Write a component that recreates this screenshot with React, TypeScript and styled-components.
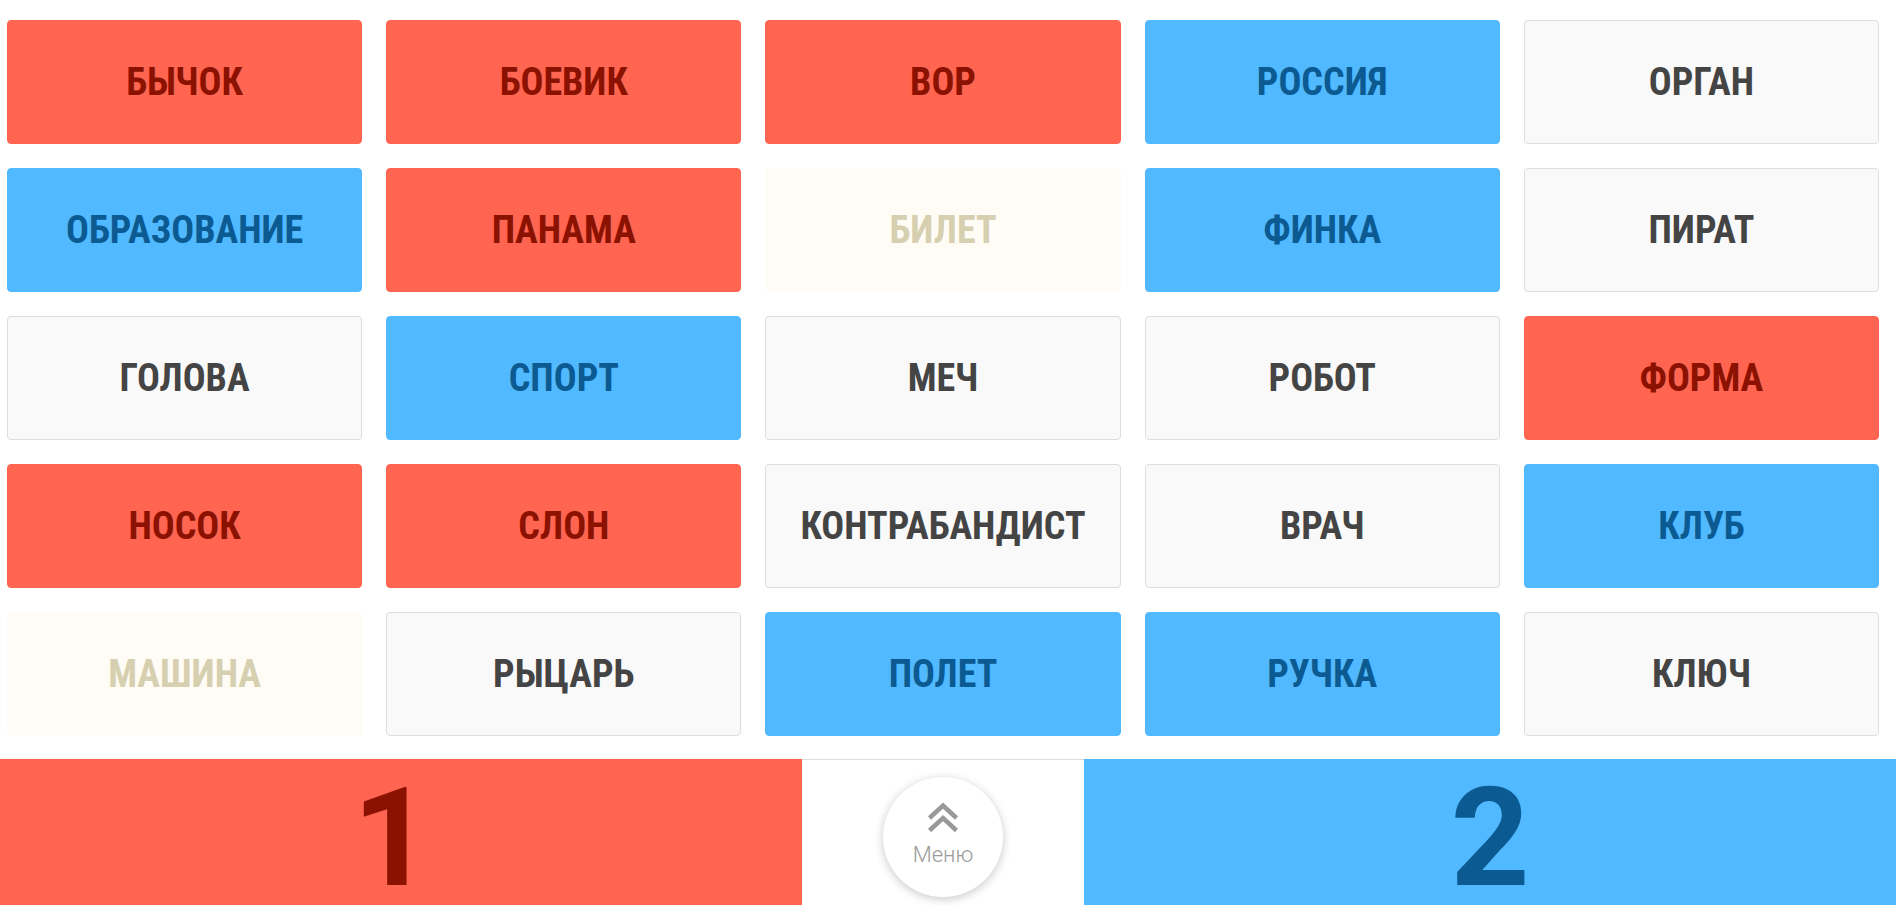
import React from "react";
import styled, { createGlobalStyle } from "styled-components";

const GlobalStyle = createGlobalStyle`
  html, body {
    margin: 0;
    padding: 0;
    background: #ffffff;
    overflow: hidden;
  }
  * { box-sizing: border-box; }
`;

type Kind = "red" | "blue" | "neutral" | "beige";

const palette: Record<Kind, { bg: string; fg: string; border: string }> = {
  red: { bg: "#ff6551", fg: "#8b1100", border: "#ff6551" },
  blue: { bg: "#51b9ff", fg: "#0b5a92", border: "#51b9ff" },
  neutral: { bg: "#f9f9f9", fg: "#444444", border: "#dddddd" },
  beige: { bg: "#fffcf5", fg: "#d6cfb0", border: "#fffcf5" },
};

const words: { text: string; kind: Kind }[] = [
  { text: "БЫЧОК", kind: "red" },
  { text: "БОЕВИК", kind: "red" },
  { text: "ВОР", kind: "red" },
  { text: "РОССИЯ", kind: "blue" },
  { text: "ОРГАН", kind: "neutral" },
  { text: "ОБРАЗОВАНИЕ", kind: "blue" },
  { text: "ПАНАМА", kind: "red" },
  { text: "БИЛЕТ", kind: "beige" },
  { text: "ФИНКА", kind: "blue" },
  { text: "ПИРАТ", kind: "neutral" },
  { text: "ГОЛОВА", kind: "neutral" },
  { text: "СПОРТ", kind: "blue" },
  { text: "МЕЧ", kind: "neutral" },
  { text: "РОБОТ", kind: "neutral" },
  { text: "ФОРМА", kind: "red" },
  { text: "НОСОК", kind: "red" },
  { text: "СЛОН", kind: "red" },
  { text: "КОНТРАБАНДИСТ", kind: "neutral" },
  { text: "ВРАЧ", kind: "neutral" },
  { text: "КЛУБ", kind: "blue" },
  { text: "МАШИНА", kind: "beige" },
  { text: "РЫЦАРЬ", kind: "neutral" },
  { text: "ПОЛЕТ", kind: "blue" },
  { text: "РУЧКА", kind: "blue" },
  { text: "КЛЮЧ", kind: "neutral" },
];

const Page = styled.div`
  width: 1896px;
  height: 905px;
  display: flex;
  flex-direction: column;
  overflow: hidden;
`;

const Board = styled.div`
  display: grid;
  grid-template-columns: repeat(5, 1fr);
  grid-auto-rows: 124px;
  column-gap: 24px;
  row-gap: 24px;
  padding: 20px 17px 23px 7px;
`;

const Card = styled.div<{ $kind: Kind }>`
  display: flex;
  align-items: center;
  justify-content: center;
  background: ${(p) => palette[p.$kind].bg};
  border: 1px solid ${(p) => palette[p.$kind].border};
  border-radius: 4px;
  color: ${(p) => palette[p.$kind].fg};
  font-family: "Roboto Condensed", Roboto, "Liberation Sans", sans-serif;
  font-weight: 700;
  font-size: 38px;
  text-transform: uppercase;
  user-select: none;
`;

const Footer = styled.div`
  flex: 0 0 146px;
  display: grid;
  grid-template-columns: 802fr 282fr 812fr;
`;

const Score = styled.div<{ $team: "red" | "blue" }>`
  display: flex;
  justify-content: center;
  align-items: flex-start;
  padding-top: 29px;
  padding-right: ${(p) => (p.$team === "red" ? "18px" : "0")};
  background: ${(p) => (p.$team === "red" ? "#ff6551" : "#51b9ff")};
  color: ${(p) => (p.$team === "red" ? "#8b1100" : "#0b5a92")};
  font-family: Roboto, "Liberation Sans", sans-serif;
  font-weight: 700;
  font-size: 138px;
  line-height: 100px;
`;

const Middle = styled.div`
  display: flex;
  justify-content: center;
  align-items: flex-start;
  padding-top: 17px;
  background: #ffffff;
  border-top: 1px solid #dddddd;
`;

const MenuButton = styled.button`
  width: 120px;
  height: 120px;
  border-radius: 50%;
  border: none;
  background: #ffffff;
  box-shadow: 0 2px 10px rgba(0, 0, 0, 0.22);
  display: flex;
  flex-direction: column;
  align-items: center;
  justify-content: flex-start;
  padding: 25px 0 0;
  gap: 11px;
  cursor: pointer;
`;

const MenuLabel = styled.span`
  font-family: Roboto, "Liberation Sans", sans-serif;
  font-weight: 300;
  font-size: 22px;
  line-height: 1;
  color: #9a9a9a;
`;

const Chevrons = () => (
  <svg width="32" height="31" viewBox="0 0 32 31" fill="none">
    <polyline points="2.5,16 16,3.5 29.5,16" stroke="#999999" strokeWidth="4.5" />
    <polyline points="2.5,28.5 16,16 29.5,28.5" stroke="#999999" strokeWidth="4.5" />
  </svg>
);

export default function App() {
  return (
    <>
      <GlobalStyle />
      <Page>
        <Board>
          {words.map((w) => (
            <Card key={w.text} $kind={w.kind}>
              {w.text}
            </Card>
          ))}
        </Board>
        <Footer>
          <Score $team="red">1</Score>
          <Middle>
            <MenuButton>
              <Chevrons />
              <MenuLabel>Меню</MenuLabel>
            </MenuButton>
          </Middle>
          <Score $team="blue">2</Score>
        </Footer>
      </Page>
    </>
  );
}
